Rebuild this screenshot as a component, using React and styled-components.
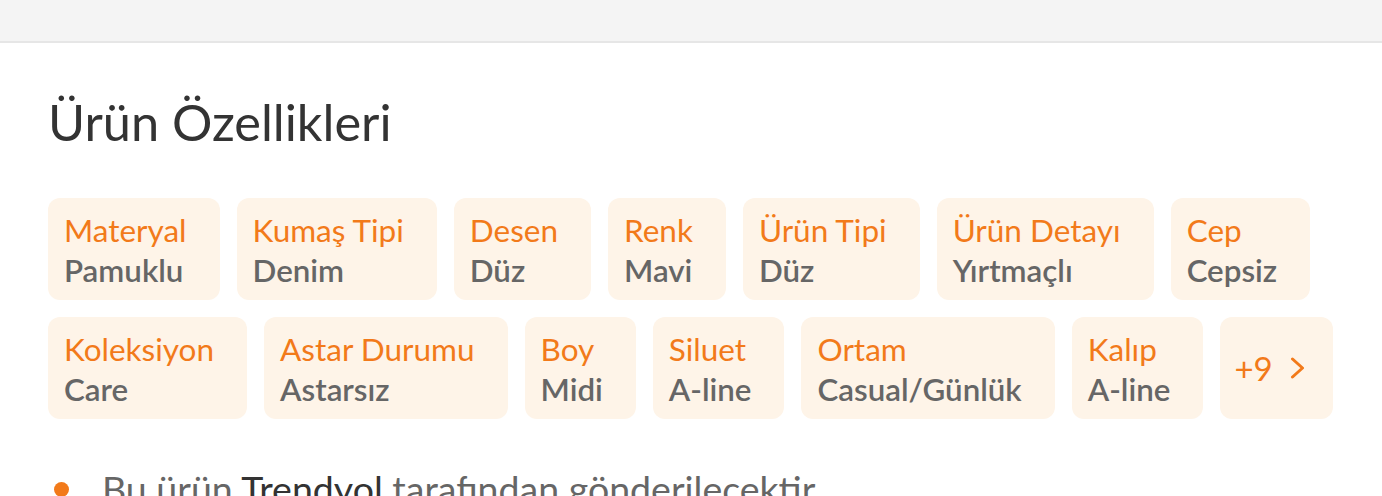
import styled, { createGlobalStyle } from 'styled-components';

const GlobalStyle = createGlobalStyle`
  html, body {
    margin: 0;
    padding: 0;
    background: #fff;
    font-family: Lato, "Open Sans", sans-serif;
    overflow: hidden;
  }
`;

const TopBar = styled.div`
  height: 41px;
  background: #f4f4f4;
  border-bottom: 2px solid #e6e6e6;
`;

const Section = styled.section`
  padding: 0 20px 0 48px;
`;

const Title = styled.h2`
  margin: 50px 0 0;
  font-size: 50.5px;
  font-weight: 400;
  line-height: 58px;
  color: #333;
`;

const AttrList = styled.div`
  display: flex;
  flex-wrap: wrap;
  gap: 17px;
  margin-top: 47px;
`;

const Chip = styled.div`
  display: flex;
  flex-direction: column;
  justify-content: center;
  min-height: 102px;
  box-sizing: border-box;
  padding: 12px 33px 10px 16px;
  background: #fef4e8;
  border-radius: 12px;
`;

const Label = styled.span`
  font-size: 31.5px;
  line-height: 40px;
  color: #f27a1a;
  white-space: nowrap;
`;

const Value = styled.span`
  font-size: 31.3px;
  line-height: 40px;
  font-weight: 600;
  color: #666;
  white-space: nowrap;
`;

const MoreChip = styled(Chip)`
  flex-direction: row;
  align-items: center;
  gap: 17px;
  padding: 0 28px 0 14px;
  font-size: 33px;
  color: #f27a1a;
`;

const InfoList = styled.ul`
  list-style: none;
  margin: 47px 0 0;
  padding: 0;
`;

const InfoItem = styled.li`
  display: flex;
  align-items: center;
  gap: 33px;
  font-size: 37.5px;
  line-height: 46px;
  color: #666;
  white-space: nowrap;

  &::before {
    content: '';
    width: 15px;
    height: 15px;
    margin-left: 6px;
    border-radius: 50%;
    background: #f27a1a;
    flex-shrink: 0;
  }

  b {
    font-weight: 400;
    color: #333;
  }
`;

const attrs = [
  ['Materyal', 'Pamuklu'],
  ['Kumaş Tipi', 'Denim'],
  ['Desen', 'Düz'],
  ['Renk', 'Mavi'],
  ['Ürün Tipi', 'Düz'],
  ['Ürün Detayı', 'Yırtmaçlı'],
  ['Cep', 'Cepsiz'],
  ['Koleksiyon', 'Care'],
  ['Astar Durumu', 'Astarsız'],
  ['Boy', 'Midi'],
  ['Siluet', 'A-line'],
  ['Ortam', 'Casual/Günlük'],
  ['Kalıp', 'A-line'],
];

export default function App() {
  return (
    <>
      <GlobalStyle />
      <TopBar />
      <Section>
        <Title>Ürün Özellikleri</Title>
        <AttrList>
          {attrs.map(([label, value]) => (
            <Chip key={label}>
              <Label>{label}</Label>
              <Value>{value}</Value>
            </Chip>
          ))}
          <MoreChip>
            <span>+9</span>
            <svg width="15" height="22" viewBox="0 0 15 22" fill="none">
              <path d="M2.5 2l10 9-10 9" stroke="#f27a1a" strokeWidth="3" strokeLinecap="round" strokeLinejoin="round" />
            </svg>
          </MoreChip>
        </AttrList>
        <InfoList>
          <InfoItem>
            <span>
              Bu ürün <b>Trendyol</b> tarafından gönderilecektir.
            </span>
          </InfoItem>
        </InfoList>
      </Section>
    </>
  );
}
